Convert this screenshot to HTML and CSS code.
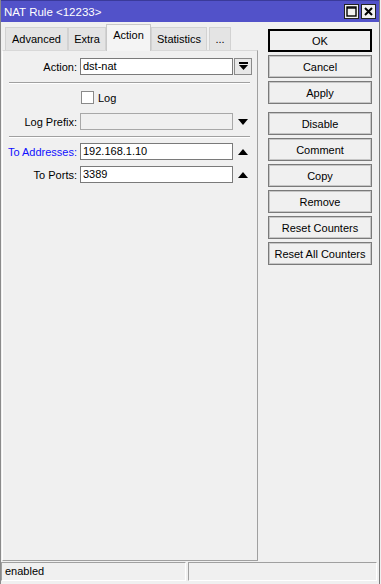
FILE: index.html
```html
<!DOCTYPE html>
<html lang="en">
<head>
    <meta charset="UTF-8">
    <title>NAT Rule &lt;12233&gt;</title>
    <link rel="stylesheet" href="styles.css">
</head>
<body>
    <div class="window">

        <!-- Title bar -->
        <div class="titlebar">
            <span class="title">NAT Rule &lt;12233&gt;</span>
            <div class="title-buttons">
                <span class="tbtn">
                    <svg width="11" height="11" viewBox="0 0 11 11"><rect x="1" y="1" width="9" height="9" fill="none" stroke="#000" stroke-width="1.4"/><line x1="1" y1="2" x2="10" y2="2" stroke="#000" stroke-width="1.4"/></svg>
                </span>
                <span class="tbtn">
                    <svg width="11" height="11" viewBox="0 0 11 11"><path d="M2 2 L9 9 M9 2 L2 9" stroke="#000" stroke-width="2"/></svg>
                </span>
            </div>
        </div>

        <div class="content">
            <!-- Left side: tabs + form -->
            <div class="left">
                <div class="tabs">
                    <span class="tab tab-advanced">Advanced</span>
                    <span class="tab tab-extra">Extra</span>
                    <span class="tab tab-action active">Action</span>
                    <span class="tab tab-stats">Statistics</span>
                    <span class="tab tab-more">...</span>
                </div>

                <div class="panel">
                    <div class="row">
                        <label class="label">Action:</label>
                        <div class="field">dst-nat</div>
                        <span class="drop-btn">
                            <svg width="9" height="9" viewBox="0 0 9 9"><rect x="0" y="0" width="9" height="2" fill="#000"/><path d="M0 3 L9 3 L4.5 8 Z" fill="#000"/></svg>
                        </span>
                    </div>

                    <div class="sep sep-1"></div>

                    <div class="check-row">
                        <span class="checkbox"></span>
                        <span>Log</span>
                    </div>

                    <div class="row row-prefix">
                        <label class="label">Log Prefix:</label>
                        <div class="field disabled"></div>
                        <span class="arrow">
                            <svg width="10" height="6" viewBox="0 0 10 6"><path d="M0 0 L10 0 L5 6 Z" fill="#000"/></svg>
                        </span>
                    </div>

                    <div class="sep sep-2"></div>

                    <div class="row row-addr">
                        <label class="label blue">To Addresses:</label>
                        <div class="field">192.168.1.10</div>
                        <span class="arrow">
                            <svg width="10" height="6" viewBox="0 0 10 6"><path d="M0 6 L10 6 L5 0 Z" fill="#000"/></svg>
                        </span>
                    </div>

                    <div class="row row-ports">
                        <label class="label">To Ports:</label>
                        <div class="field">3389</div>
                        <span class="arrow">
                            <svg width="10" height="6" viewBox="0 0 10 6"><path d="M0 6 L10 6 L5 0 Z" fill="#000"/></svg>
                        </span>
                    </div>
                </div>
            </div>

            <!-- Right side: buttons -->
            <div class="buttons">
                <button class="btn default">OK</button>
                <button class="btn">Cancel</button>
                <button class="btn">Apply</button>
                <button class="btn group">Disable</button>
                <button class="btn">Comment</button>
                <button class="btn">Copy</button>
                <button class="btn">Remove</button>
                <button class="btn">Reset Counters</button>
                <button class="btn">Reset All Counters</button>
            </div>
        </div>

        <!-- Status bar -->
        <div class="statusbar">
            <div class="cell cell-1">enabled</div>
            <div class="cell cell-2"></div>
        </div>
    </div>
</body>
</html>
```

FILE: styles.css
```css
/* Global */
* {
    margin: 0;
    padding: 0;
    box-sizing: border-box;
}

body {
    background: #f0f0f0;
    font-family: "Liberation Sans", Arial, sans-serif;
    font-size: 11px;
    color: #000;
}

.window {
    width: 380px;
    height: 584px;
    display: flex;
    flex-direction: column;
    border-left: 1px solid #8a8a8a;
    border-right: 1px solid #7a7a7a;
    background: #f0f0f0;
}

/* Title bar */
.titlebar {
    height: 22px;
    flex: none;
    background: #5252c9;
    border-top: 1px solid #3a3a9a;
    display: flex;
    align-items: center;
    justify-content: space-between;
    padding: 0 3px 0 3px;
}

.title {
    color: #fff;
    font-size: 11.5px;
}

.title-buttons {
    display: flex;
    gap: 2px;
}

.tbtn {
    width: 15px;
    height: 15px;
    background: #f0f0f0;
    border: 1px solid #222;
    display: flex;
    align-items: center;
    justify-content: center;
}

/* Main area */
.content {
    flex: 1;
    display: flex;
}

.left {
    width: 257px;
    padding-left: 1px;
    display: flex;
    flex-direction: column;
}

/* Tabs */
.tabs {
    height: 28px;
    display: flex;
    align-items: flex-end;
    padding-left: 3px;
    position: relative;
    z-index: 1;
}

.tab {
    height: 23px;
    display: flex;
    align-items: center;
    justify-content: center;
    background: #e4e4e4;
    border: 1px solid #d2d2d2;
    border-bottom: none;
    padding-bottom: 1px;
    flex: none;
}

.tab-advanced { width: 63px; }
.tab-extra { width: 38px; }
.tab-action { width: 45px; }
.tab-stats { width: 56px; }
.tab-more { width: 22px; margin-left: 2px; }

.tab.active {
    height: 27px;
    margin-bottom: -1px;
    background: #f4f4f4;
    border-color: #c8c8c8;
    padding-bottom: 6px;
}

.panel {
    flex: 1;
    border: 1px solid #fff;
    border-right-color: #a0a0a0;
    border-bottom-color: #a0a0a0;
    border-top-color: #d8d8d8;
    padding: 7px 0 0 0;
}

/* Form rows */
.row {
    height: 17px;
    display: flex;
    align-items: center;
}

.label {
    width: 74px;
    text-align: right;
    margin-right: 3px;
    white-space: nowrap;
}

.label.blue {
    color: #1010ff;
}

.field {
    width: 153px;
    height: 17px;
    background: #fff;
    border: 1px solid #7a7a7a;
    padding: 0 2px;
    line-height: 15px;
}

.field.disabled {
    background: #f0f0f0;
    border-color: #a8a8a8;
}

.drop-btn {
    width: 18px;
    height: 17px;
    margin-left: 1px;
    border: 1px solid #8a8a8a;
    background: #e8e8e8;
    display: flex;
    align-items: center;
    justify-content: center;
}

.arrow {
    width: 18px;
    margin-left: 1px;
    display: flex;
    align-items: center;
    justify-content: center;
}

.sep {
    height: 2px;
    margin: 0 7px 0 6px;
    border-top: 1px solid #a0a0a0;
    border-bottom: 1px solid #fff;
}

.sep-1 { margin-top: 7px; }
.sep-2 { margin-top: 6px; }

.check-row {
    height: 13px;
    margin-top: 7px;
    padding-left: 78px;
    display: flex;
    align-items: center;
    gap: 4px;
}

.checkbox {
    width: 13px;
    height: 13px;
    background: #fff;
    border: 1px solid #8a8a8a;
}

.row-prefix { margin-top: 9px; }
.row-addr { margin-top: 5px; }
.row-ports { margin-top: 6px; }

/* Buttons column */
.buttons {
    width: 120px;
    padding: 7px 0 0 10px;
    display: flex;
    flex-direction: column;
    gap: 3px;
}

.btn {
    width: 104px;
    height: 23px;
    font-family: "Liberation Sans", Arial, sans-serif;
    font-size: 11px;
    color: #000;
    background: #f0f0f0;
    border: 1px solid #7a7a7a;
    box-shadow: inset 0 0 0 1px #c6c6c6;
}

.btn.default {
    border: 2px solid #000;
    box-shadow: none;
}

.btn.group {
    margin-top: 5px;
}

/* Status bar */
.statusbar {
    height: 23px;
    flex: none;
    display: flex;
    gap: 2px;
    padding: 1px 0 3px 0;
}

.cell {
    border: 1px solid #fff;
    border-top-color: #a0a0a0;
    border-left-color: #a0a0a0;
    padding: 2px 0 0 3px;
}

.cell-1 { width: 185px; }
.cell-2 { width: 189px; }
```
